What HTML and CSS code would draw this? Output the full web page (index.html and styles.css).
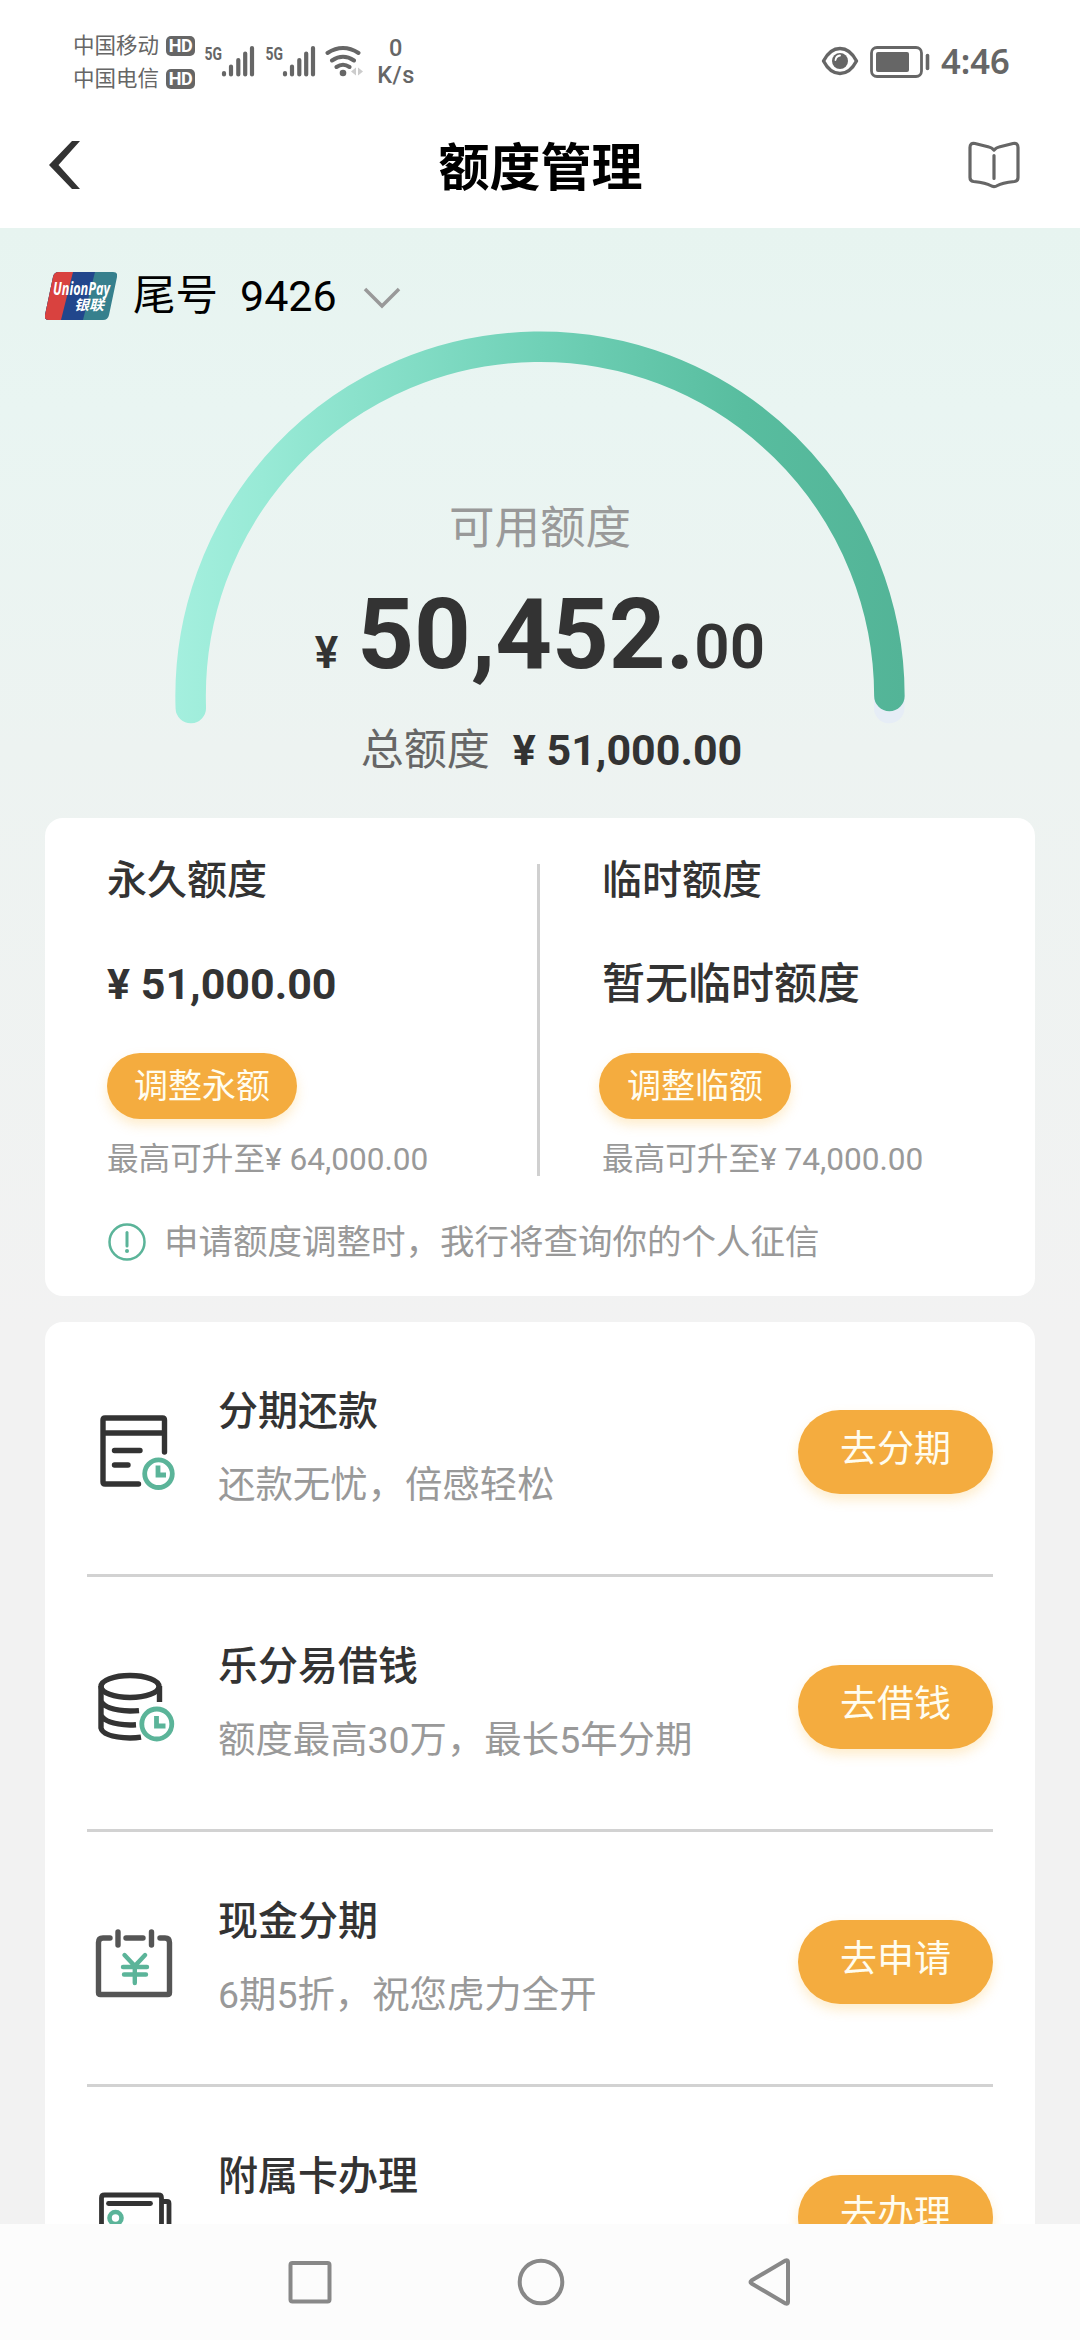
FILE: index.html
```html
<!DOCTYPE html>
<html lang="zh-CN">
<head>
<meta charset="utf-8">
<title>额度管理</title>
<link rel="stylesheet" href="styles.css">
</head>
<body>
<div class="screen">
  <div class="status">
    <div class="carriers">
      <div class="carrier"><span>中国移动</span><b class="hd">HD</b></div>
      <div class="carrier"><span>中国电信</span><b class="hd">HD</b></div>
    </div>
    <svg class="signal" width="50" height="40" viewBox="204 39 50 40"><text x="204.500" y="59.500" class="g5" textLength="17.500" lengthAdjust="spacingAndGlyphs">5G</text><path class="bars" d="M224 73v1.500M231 66.500v8M238.300 60v14.500M245.200 53.500v21M252 48v26.500"/></svg>
    <svg class="signal second" width="50" height="40" viewBox="204 39 50 40"><text x="204.500" y="59.500" class="g5" textLength="17.500" lengthAdjust="spacingAndGlyphs">5G</text><path class="bars" d="M224 73v1.500M231 66.500v8M238.300 60v14.500M245.200 53.500v21M252 48v26.500"/></svg>
    <svg class="wifi" width="40" height="36" viewBox="324 43 40 36"><g fill="none" stroke="#666" stroke-width="4" stroke-linecap="round"><path d="M327.500 53q15.500-10 31 0M332 60.500q11-7.500 22 0M336.500 67q6.500-4.500 13 0"/></g><circle cx="343" cy="73" r="3.300" fill="#666"/><path d="M356 67.500v8l-5-4zM358 67.500v8l5-4z" fill="#ccc"/></svg>
    <div class="speed"><span>0</span><span>K/s</span></div>
    <svg class="eye" width="38" height="32" viewBox="0 0 38 32"><path d="M2.500 16Q9 3.500 19 3.500T35.500 16Q29 28.500 19 28.500T2.500 16Z" fill="none" stroke="#666" stroke-width="3.400" stroke-linejoin="round"/><circle cx="19" cy="16" r="8" fill="#666"/><path d="M14.500 15q.5-4 4.500-4.500" fill="none" stroke="#fff" stroke-width="1.800" stroke-linecap="round"/></svg>
    <svg class="battery" width="61" height="32" viewBox="0 0 61 32"><rect x="1.500" y="1.500" width="50" height="29" rx="5.500" fill="none" stroke="#666" stroke-width="2.800"/><rect x="6" y="6" width="33" height="20" rx="2" fill="#666"/><path d="M57.500 9.500v13" stroke="#666" stroke-width="3.600" stroke-linecap="round"/></svg>
    <span class="time">4:46</span>
  </div>
  <header class="bar">
    <svg width="34" height="50" viewBox="0 0 34 50"><path d="M24 1h8L10.500 25 32 49h-8L1 25z" fill="#333"/></svg>
    <h1>额度管理</h1>
    <svg width="52" height="48" viewBox="0 0 52 48"><path d="M2 6.500q0-5 5-4L21 6q2.500.5 5 3 2.500-2.500 5-3L45 2.500q5-1 5 4v30q0 3.500-3.500 4-13 1.500-17 4-3.500 2.200-7 0-4-2.500-17-4Q2 40 2 36.500zM26 14.500v23" fill="none" stroke="#666" stroke-width="3.200" stroke-linecap="round" stroke-linejoin="round"/></svg>
  </header>
  <main class="content">
    <div class="account">
      <svg width="72" height="48" viewBox="0 0 72 48"><defs><clipPath id="card"><path d="M14 0h54q5 0 4 5l-8 38q-1 5-6 5H4q-5 0-4-5L8 5q1-5 6-5z"/></clipPath></defs><g clip-path="url(#card)"><path d="M0 0h72v48H0z" fill="#36808d"/><path d="M0 0h50L38 48H0z" fill="#21468c"/><path d="M0 0h28L16 48H0z" fill="#d9423f"/></g><text x="8" y="22.500" class="up" textLength="57" lengthAdjust="spacingAndGlyphs">UnionPay</text><text x="29" y="37.500" class="yl" textLength="30" lengthAdjust="spacingAndGlyphs">银联</text></svg>
      <span class="tail">尾号</span><span class="num">9426</span>
      <svg class="down" width="38" height="22" viewBox="0 0 38 22"><path d="M2 2l17 17L36 2" fill="none" stroke="#999" stroke-width="3.500"/></svg>
    </div>
    <section class="gauge">
      <svg class="arc" width="740" height="400" viewBox="170 328 740 400"><defs><linearGradient id="g" gradientUnits="userSpaceOnUse" x1="175" y1="0" x2="905" y2="0"><stop offset="0" stop-color="#a4efde"/><stop offset=".12" stop-color="#98ead6"/><stop offset=".5" stop-color="#70d1b7"/><stop offset=".78" stop-color="#58bd9f"/><stop offset="1" stop-color="#53b497"/></linearGradient></defs><g fill="none" stroke-linecap="round" stroke-width="30.500"><path d="M889.200 708A349.400 349.400 0 0 0 889.400 696" stroke="#e6edf6"/><path d="M190.800 708A349.400 349.400 0 1 1 889.400 696" stroke="url(#g)"/></g></svg>
      <p class="label">可用额度</p>
      <p class="amount"><span class="yen">¥</span><span class="big">50,452.</span><span class="cents">00</span></p>
      <p class="total"><span>总额度</span><b>¥ 51,000.00</b></p>
    </section>
    <section class="card limits">
      <div class="cols">
        <div class="col">
          <h2>永久额度</h2><p class="value">¥ 51,000.00</p><a class="pill small">调整永额</a><p class="max">最高可升至¥ 64,000.00</p>
        </div>
        <div class="col temp">
          <h2>临时额度</h2><p class="value cn">暂无临时额度</p><a class="pill small">调整临额</a><p class="max">最高可升至¥ 74,000.00</p>
        </div>
      </div>
      <p class="note"><svg width="40" height="40" viewBox="0 0 40 40"><circle cx="20" cy="20" r="17.500" fill="none" stroke="#5bb499" stroke-width="2.500"/><path d="M20 10.500v13.500" stroke="#5bb499" stroke-width="3" stroke-linecap="round"/><circle cx="20" cy="29" r="2" fill="#5bb499"/></svg><span>申请额度调整时，我行将查询你的个人征信</span></p>
    </section>
    <section class="card list">
      <div class="row">
        <svg class="ico" width="84" height="84" viewBox="94 1410 84 84"><g fill="none" stroke="#333" stroke-width="5.400" stroke-linecap="round" stroke-linejoin="round"><path d="M164.500 1452v-32q0-2-2-2h-57.500q-2 0-2 2v62q0 2 2 2h33.500M103 1433h61.500M114.500 1450.500h25.500M114.500 1465h13.500"/></g><g fill="none" stroke="#5bb499" stroke-width="4.800"><circle cx="158.500" cy="1473.700" r="13.800"/><path d="M158 1465.500v9.500h8"/></g></svg>
        <div class="txt"><h3>分期还款</h3><p>还款无忧，倍感轻松</p></div><a class="pill">去分期</a>
      </div>
      <div class="row">
        <svg class="ico" width="84" height="84" viewBox="94 1665 84 84"><g fill="none" stroke="#333" stroke-width="5.400"><ellipse cx="130" cy="1686.500" rx="29" ry="11"/><path d="M101 1686v42q2 9 29 10 6 0 11-.8M101 1701q4 9 29 10 5 0 9-.4M101 1715q4 9 29 10 3 0 6-.2M159.500 1686v16"/></g><g fill="none" stroke="#5bb499" stroke-width="4.800"><circle cx="156.800" cy="1724" r="15"/><path d="M156.500 1716v10h9"/></g></svg>
        <div class="txt"><h3>乐分易借钱</h3><p>额度最高30万，最长5年分期</p></div><a class="pill">去借钱</a>
      </div>
      <div class="row">
        <svg class="ico" width="84" height="84" viewBox="94 1920 84 84"><g fill="none" stroke="#555" stroke-width="5.400" stroke-linecap="round" stroke-linejoin="round"><path d="M110 1938h-7q-4.500 0-4.500 4.500v50q0 2 2 2h67q2 0 2-2v-50q0-4.500-4.500-4.500h-5M126 1938h17M118 1932v13M151.500 1932v13"/></g><path d="M124.500 1955l10.300 11 10.300-11M134.800 1966v17M123 1967h24M124 1974.500h22" fill="none" stroke="#5bb499" stroke-width="4.400" stroke-linecap="round"/></svg>
        <div class="txt"><h3>现金分期</h3><p>6期5折，祝您虎力全开</p></div><a class="pill">去申请</a>
      </div>
      <div class="row">
        <svg class="ico" width="84" height="84" viewBox="94 2175 84 84"><g fill="none" stroke="#333" stroke-width="4.800" stroke-linejoin="round"><path d="M101.500 2250v-52q0-3 3-3h54q3 0 3 3v52M162 2201.500h5q2 0 2 2v46.500"/><path d="M108.500 2203.500h42" stroke-linecap="round"/></g><circle cx="115.500" cy="2218" r="6" fill="none" stroke="#5bb499" stroke-width="4.600"/></svg>
        <div class="txt"><h3>附属卡办理</h3></div><a class="pill">去办理</a>
      </div>
    </section>
  </main>
  <nav class="nav">
    <svg width="502" height="50" viewBox="287 2257 502 50"><g fill="none" stroke="#888" stroke-width="4" stroke-linejoin="round"><rect x="289.500" y="2263" width="39" height="38.500" rx="2"/><circle cx="540" cy="2282" r="21.300"/><path d="M784.500 2260.500q2.500-1 2.500 1.500v40q0 2.500-2.500 1.500l-34-20q-2-1.500 0-3z"/></g></svg>
  </nav>
</div>
</body>
</html>
```
FILE: styles.css
```css
* { box-sizing: border-box; margin: 0; padding: 0; }
body { background: #fff; font-family: Roboto, "Noto Sans CJK SC", sans-serif; color: #333; }
svg { display: block; flex: none; }
.screen { width: 1080px; height: 2340px; overflow: hidden; display: flex; flex-direction: column; }

.status { height: 106px; flex: none; display: flex; align-items: flex-start; padding: 29px 0 0 73px; color: #666; white-space: nowrap; }
.carriers { width: 122px; }
.carrier { display: flex; align-items: center; justify-content: space-between; height: 33px; font-size: 21.500px; line-height: 33px; }
.hd { width: 29px; height: 20px; border-radius: 5px; background: #666; color: #fff; font-size: 18px; line-height: 20px; text-align: center; letter-spacing: -.5px; }
.signal { margin: 10px 0 0 9px; overflow: visible; }
.signal.second { margin-left: 11px; }
.g5 { font: 700 19px Roboto, sans-serif; fill: #666; }
.bars { fill: none; stroke: #666; stroke-width: 4.2; stroke-linecap: round; }
.wifi { margin: 14px 0 0 9px; }
.speed { width: 40px; margin: 6px 0 0 12px; display: flex; flex-direction: column; text-align: center; font-size: 23.500px; font-weight: 500; line-height: 27px; letter-spacing: .5px; }
.eye { margin: 16px 0 0 405px; }
.battery { margin: 17px 0 0 11px; }
.time { margin: 8px 0 0 10px; font: 600 34.500px/48px "Noto Sans", sans-serif; }

.bar { height: 122px; flex: none; display: flex; align-items: center; justify-content: space-between; padding: 0 60px 4px 48px; }
.bar h1 { font-size: 51px; font-weight: 700; line-height: 60px; color: #000; padding-top: 8px; margin-left: 31px; }

.content { height: 1996px; flex: none; overflow: hidden; padding: 0 45px; background: linear-gradient(#e7f4f0 0, #e9f5f2 180px, #edf3f1 520px, #f2f2f2 1100px); }
.account { height: 92px; padding-top: 43px; display: flex; align-items: center; color: #000; font-size: 42.500px; line-height: 48px; }
.up { font: italic 700 17px "Open Sans", sans-serif; fill: #fff; }
.yl { font: italic 700 14px "Noto Sans CJK SC", sans-serif; fill: #fff; }
.tail { margin-left: 16px; }
.num { margin-left: 22px; font-size: 43px; }
.down { margin: 5px 0 0 26px; }

.gauge { position: relative; height: 498px; display: flex; flex-direction: column; align-items: center; padding-top: 175px; }
.arc { position: absolute; left: 125px; top: 8px; }
.label { position: relative; font-size: 45.500px; line-height: 68px; color: #999; }
.amount { position: relative; display: flex; align-items: baseline; margin-top: 11px; height: 120px; line-height: 120px; font-weight: 700; }
.yen { font-size: 44px; font-weight: 600; }
.big { font-size: 99px; margin-left: 19px; }
.cents { font-size: 62px; font-weight: 600; }
.total { position: relative; display: flex; align-items: center; margin-top: 24px; margin-left: 23px; line-height: 64px; font-size: 43px; color: #666; }
.total b { margin-left: 23px; color: #333; font-size: 43px; }

.card { background: #fff; border-radius: 18px; }
.limits { height: 478px; padding: 46px 62px 0; }
.cols { display: flex; height: 312px; }
.col { width: 433px; border-right: 3px solid #d0d0d0; display: flex; flex-direction: column; align-items: flex-start; white-space: nowrap; }
.col.temp { border: 0; padding-left: 62px; }
.col h2 { font-size: 40px; font-weight: 500; line-height: 60px; margin-top: -13px; }
.value { font-size: 43px; font-weight: 700; line-height: 64px; margin-top: 41px; }
.value.cn { font-size: 43px; font-weight: 500; }
.max { font-size: 31.600px; line-height: 48px; color: #999; margin-top: 17px; }
.pill { display: block; width: 195px; height: 84px; border-radius: 42px; background: #f4ac3f; color: #fffdf0; text-align: center; font-size: 37px; line-height: 79px; box-shadow: 0 6px 12px rgba(250, 190, 70, .27); flex: none; }
.pill.small { width: 190px; height: 66px; border-radius: 33px; font-size: 34px; line-height: 67px; margin-top: 37px; }
.temp .pill.small { width: 192px; margin-left: -3px; }
.note { display: flex; align-items: center; margin-top: 44px; height: 44px; font-size: 34.500px; line-height: 44px; color: #999; white-space: nowrap; }
.note span { margin-left: 17px; }

.list { margin-top: 26px; padding: 0 42px; }
.row { height: 255px; display: flex; align-items: flex-start; padding-top: 88px; border-bottom: 3px solid #d2d2d2; }
.row .ico { margin-left: 7px; }
.txt { flex: 1; margin: -28px 0 0 40px; white-space: nowrap; }
.txt h3 { font-size: 40px; font-weight: 500; line-height: 60px; }
.txt p { font-size: 37.400px; line-height: 56px; color: #999; margin-top: 15px; }

.nav { height: 116px; flex: none; background: #fcfcfc; display: flex; justify-content: center; padding-top: 33px; }
.nav svg { margin-right: 3px; }
```
